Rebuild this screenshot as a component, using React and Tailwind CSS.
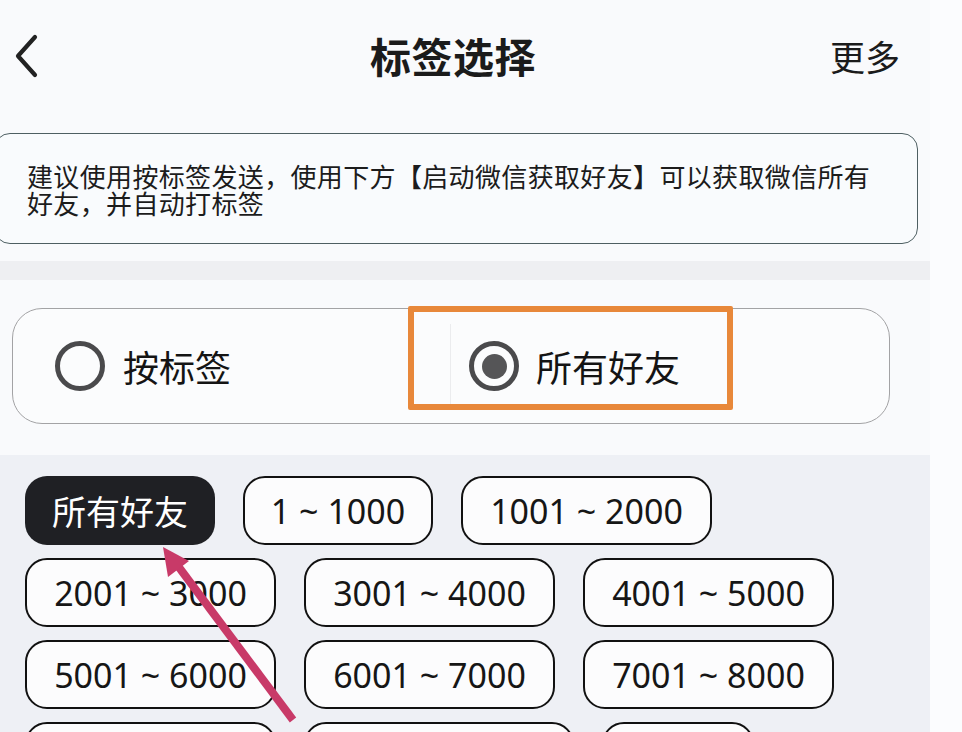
import React from "react";

const cjk = { fontFamily: '"Noto Sans CJK SC", "Noto Sans", sans-serif' };
const num = { fontFamily: '"Noto Sans", "Noto Sans CJK SC", sans-serif' };

function Chip({ label, w, active }) {
  return (
    <div
      className={
        "h-[69px] shrink-0 flex items-center justify-center rounded-[22px] text-[34px] leading-none " +
        w +
        (active
          ? " bg-[#1f2024] text-white"
          : " bg-[#fcfcfd] border-[2.5px] border-[#111111] text-[#161616]")
      }
      style={active ? cjk : num}
    >
      {label}
    </div>
  );
}

function Radio({ checked }) {
  return (
    <div className="w-[50px] h-[50px] rounded-full border-[5px] border-[#4a4a4c] flex items-center justify-center shrink-0">
      {checked && <div className="w-[25px] h-[25px] rounded-full bg-[#555557]" />}
    </div>
  );
}

export default function App() {
  const rows = [
    [
      { label: "所有好友", w: "w-[190px]", active: true },
      { label: "1 ~ 1000", w: "w-[190px]" },
      { label: "1001 ~ 2000", w: "w-[251px]" },
    ],
    [
      { label: "2001 ~ 3000", w: "w-[251px]" },
      { label: "3001 ~ 4000", w: "w-[251px]" },
      { label: "4001 ~ 5000", w: "w-[251px]" },
    ],
    [
      { label: "5001 ~ 6000", w: "w-[251px]" },
      { label: "6001 ~ 7000", w: "w-[251px]" },
      { label: "7001 ~ 8000", w: "w-[251px]" },
    ],
    [
      { label: "8001 ~ 9000", w: "w-[251px]" },
      { label: "9001 ~ 10000", w: "w-[270px]" },
      { label: "10000+", w: "w-[152px]" },
    ],
  ];

  return (
    <div className="relative w-[962px] h-[732px] overflow-hidden flex bg-[#f9fafc]" style={cjk}>
      <div className="w-[930px] shrink-0 flex flex-col">
        {/* Header */}
        <div className="h-[110px] shrink-0 flex items-center">
          <svg className="ml-[14px] shrink-0" width="28" height="48" viewBox="0 0 28 48" fill="none">
            <path d="M21 6 L4 25 L21 44" stroke="#222" strokeWidth="4.2" strokeLinecap="round" strokeLinejoin="round" />
          </svg>
          <div className="ml-[328px] text-[41px] font-bold text-[#1b1b1b] leading-none tracking-[0.5px]">标签选择</div>
          <div className="ml-auto mr-[30px] text-[35px] text-[#1b1b1b] leading-none">更多</div>
        </div>

        {/* Info box */}
        <div className="mt-[23px] -ml-[6px] w-[924px] h-[111px] shrink-0 rounded-[16px] border-[1.5px] border-[#4e5f62] bg-[#f9fbfd] flex items-center pl-[32px]">
          <p className="text-[26px] leading-[27px] tracking-[0.35px] text-[#1c1c1c]">
            建议使用按标签发送，使用下方【启动微信获取好友】可以获取微信所有
            <br />
            好友，并自动打标签
          </p>
        </div>

        {/* Gray band */}
        <div className="mt-[17px] h-[19px] shrink-0 bg-[#eeeff2]" />

        {/* Radio card section */}
        <div className="h-[175px] shrink-0 pt-[28px] pl-[12px]">
          <div className="w-[878px] h-[116px] rounded-[30px] border-[1.5px] border-[#a3a3a5] bg-[#fbfcfd] flex items-center">
            <div className="w-[437px] shrink-0 flex items-center pl-[42px] gap-[18px]">
              <Radio />
              <span className="text-[36px] text-[#141414] leading-none">按标签</span>
            </div>
            <div className="w-px h-[84px] shrink-0 bg-[#ebecee]" />
            <div className="flex-1 flex items-center pl-[18px] gap-[17px]">
              <Radio checked />
              <span className="text-[36px] text-[#141414] leading-none">所有好友</span>
            </div>
          </div>
        </div>

        {/* Chips */}
        <div className="flex-1 bg-[#eef0f5] pt-[21px] pl-[25px] flex flex-col gap-y-[13px]">
          {rows.map((row, i) => (
            <div key={i} className="flex gap-[28px]">
              {row.map((c) => (
                <Chip key={c.label} {...c} />
              ))}
            </div>
          ))}
        </div>
      </div>
      <div className="flex-1 bg-[#fbfcfe]" />

      {/* Orange highlight annotation */}
      <div className="absolute left-[408px] top-[306px] w-[325px] h-[104px] border-[6px] border-[#e8883a] rounded-[2px]" />

      {/* Arrow annotation */}
      <svg className="absolute left-0 top-0 pointer-events-none" width="962" height="732" viewBox="0 0 962 732">
        <line x1="293" y1="720" x2="178" y2="566" stroke="#c83a68" strokeWidth="8" />
        <polygon points="163,547 189,561 168,577" fill="#c83a68" />
      </svg>
    </div>
  );
}
